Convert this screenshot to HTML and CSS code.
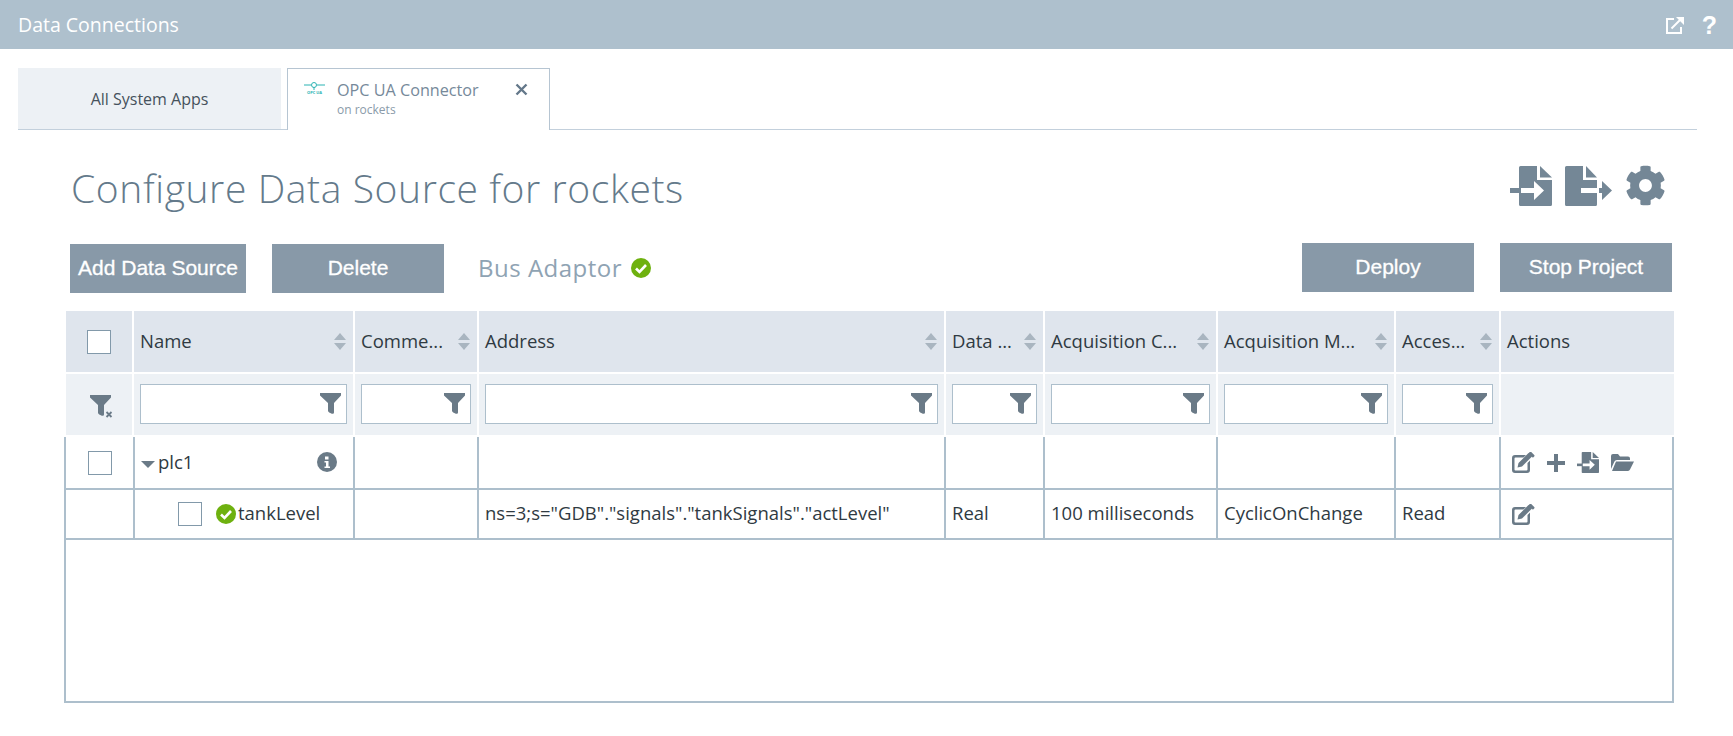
FILE: index.html
```html
<!DOCTYPE html>
<html lang="en">
<head>
    <meta charset="UTF-8">
    <meta name="viewport" content="width=device-width, initial-scale=1.0">
    <title>Data Connections</title>
    <link rel="stylesheet" href="styles.css">
</head>
<body>
    <svg class="sprites" width="0" height="0">
        <symbol id="i-import" viewBox="0 0 42 40">
            <path d="M9 1.5a1.5 1.5 0 0 1 1.5-1.5H27v14h15v24.5a1.5 1.5 0 0 1-1.5 1.5h-30A1.5 1.5 0 0 1 9 38.500z"/>
            <path d="M30 0l12 11.500H30z"/>
            <path d="M0 22h11v5H0z"/>
            <path d="M11 22h13v-7l10 9.500-10 9.500v-7H11z" fill="#fff"/>
        </symbol>
        <symbol id="i-export" viewBox="0 0 47 40">
            <path d="M0 1.500A1.500 1.500 0 0 1 1.500 0H18v14h14v8H16v5h16v11.500a1.500 1.500 0 0 1-1.500 1.500h-29A1.500 1.500 0 0 1 0 38.500z"/>
            <path d="M21 0l11 11.500H21z"/>
            <path d="M16 22h18v5H16z" fill="#fff"/>
            <path d="M34 22h3v-7l10 9.500-10 9.500v-7h-3z"/>
        </symbol>
        <symbol id="i-gear" viewBox="0 0 512 512">
            <path d="M487.400 315.700l-42.600-24.600c4.300-23.200 4.300-47 0-70.200l42.600-24.600c4.900-2.800 7.100-8.600 5.500-14-11.100-35.600-30-67.800-54.700-94.600-3.800-4.100-10-5.100-14.800-2.300L380.800 110c-17.900-15.400-38.500-27.300-60.800-35.100V25.800c0-5.600-3.900-10.500-9.400-11.700-36.700-8.200-74.300-7.800-109.200 0-5.500 1.200-9.400 6.100-9.400 11.700V75c-22.200 7.900-42.800 19.800-60.800 35.100L88.700 85.500c-4.900-2.800-11-1.900-14.800 2.300-24.700 26.700-43.600 58.900-54.700 94.600-1.700 5.400.6 11.200 5.500 14L67.300 221c-4.300 23.200-4.300 47 0 70.200l-42.600 24.600c-4.900 2.800-7.100 8.600-5.500 14 11.100 35.600 30 67.800 54.700 94.600 3.800 4.100 10 5.100 14.800 2.300l42.600-24.600c17.900 15.400 38.500 27.300 60.800 35.100v49.200c0 5.600 3.900 10.500 9.400 11.700 36.700 8.200 74.300 7.800 109.200 0 5.500-1.200 9.400-6.100 9.400-11.700v-49.200c22.200-7.900 42.800-19.800 60.800-35.100l42.600 24.600c4.900 2.800 11 1.900 14.800-2.300 24.700-26.700 43.600-58.900 54.700-94.600 1.500-5.500-.7-11.300-5.600-14.100zM256 336c-44.100 0-80-35.900-80-80s35.900-80 80-80 80 35.900 80 80-35.900 80-80 80z"/>
        </symbol>
        <symbol id="i-filter" viewBox="0 0 21 21">
            <path d="M0 0h21v2.500l-7 7.500v9.500a1.200 1.200 0 0 1-1.200 1.200c-2 0-4.800-2-4.800-3V10L0 2.500z"/>
        </symbol>
        <symbol id="i-edit" viewBox="0 0 23 21">
            <path d="M3 3h11l-2.500 2.500H3.500a1 1 0 0 0-1 1V17.500a1 1 0 0 0 1 1h11a1 1 0 0 0 1-1V11l2.500-2.500V18a3 3 0 0 1-3 3H3a3 3 0 0 1-3-3V6a3 3 0 0 1 3-3z"/>
            <path d="M5.500 15.500l1-4.500L16.500 1l3.500 3.500-10 10zM17.800 0a1 1 0 0 1 1.400 0l3 3a1 1 0 0 1 0 1.400l-1.300 1.300-4.400-4.400z"/>
        </symbol>
        <symbol id="i-check" viewBox="0 0 20 20">
            <circle cx="10" cy="10" r="10" fill="#6eb10f"/>
            <path d="M5 10.500l3.500 3.500L15 7" fill="none" stroke="#fff" stroke-width="2.600"/>
        </symbol>
    </svg>

    <header class="app-bar">
        <span class="app-title">Data Connections</span>
        <div class="app-icons">
            <svg width="20" height="20" viewBox="0 0 20 20" fill="none" stroke="#fff" stroke-width="2">
                <path d="M9 4H2v14h14v-6"/>
                <path d="M6.500 13.500L16.500 3.500"/>
                <path d="M11 2h8v8" stroke-width="0" fill="#fff"/>
            </svg>
            <span class="help">?</span>
        </div>
    </header>

    <nav class="tabs">
        <div class="tab">All System Apps</div>
        <div class="tab tab-active">
            <svg class="opc-icon" width="21" height="12" viewBox="0 0 21 12">
                <path d="M0 3h7M13 3h8M10 5v3" stroke="#2bb3b3" stroke-width="1" fill="none"/>
                <circle cx="10" cy="3" r="2.500" fill="none" stroke="#2bb3b3"/>
                <text x="10.500" y="12" text-anchor="middle" class="opc-label">OPC UA</text>
            </svg>
            <div class="tab-text">
                <div class="tab-name">OPC UA Connector</div>
                <div class="tab-sub">on rockets</div>
            </div>
            <svg class="tab-close" width="13" height="13" viewBox="0 0 13 13">
                <path d="M1.500 1.500l10 10M11.500 1.500l-10 10" stroke="#64788a" stroke-width="2.400"/>
            </svg>
        </div>
    </nav>

    <main class="content">
        <div class="title-row">
            <h1>Configure Data Source for rockets</h1>
            <div class="title-icons">
                <svg class="ti-import"><use href="#i-import"/></svg>
                <svg class="ti-export"><use href="#i-export"/></svg>
                <svg class="ti-gear"><use href="#i-gear"/></svg>
            </div>
        </div>

        <div class="toolbar">
            <button class="btn btn-add">Add Data Source</button>
            <button class="btn btn-delete">Delete</button>
            <span class="bus">Bus Adaptor <svg class="bus-check"><use href="#i-check"/></svg></span>
            <div class="toolbar-right">
                <button class="btn">Deploy</button>
                <button class="btn btn-stop">Stop Project</button>
            </div>
        </div>

        <div class="grid head-row">
            <div class="cell center"><span class="checkbox"></span></div>
            <div class="cell text sortable">Name</div>
            <div class="cell text sortable">Comme...</div>
            <div class="cell text sortable">Address</div>
            <div class="cell text sortable">Data ...</div>
            <div class="cell text sortable">Acquisition C...</div>
            <div class="cell text sortable">Acquisition M...</div>
            <div class="cell text sortable">Acces...</div>
            <div class="cell text">Actions</div>
        </div>

        <div class="grid filter-row">
            <div class="cell center">
                <svg class="clear-filter" width="24" height="24" viewBox="0 0 24 24">
                    <use href="#i-filter" width="21" height="21"/>
                    <path d="M16.500 17l5 5M21.500 17l-5 5" stroke="#6a7a87" stroke-width="1.800"/>
                </svg>
            </div>
            <div class="cell"><div class="filter-box"><svg class="filter-icon"><use href="#i-filter"/></svg></div></div>
            <div class="cell"><div class="filter-box"><svg class="filter-icon"><use href="#i-filter"/></svg></div></div>
            <div class="cell"><div class="filter-box"><svg class="filter-icon"><use href="#i-filter"/></svg></div></div>
            <div class="cell"><div class="filter-box"><svg class="filter-icon"><use href="#i-filter"/></svg></div></div>
            <div class="cell"><div class="filter-box"><svg class="filter-icon"><use href="#i-filter"/></svg></div></div>
            <div class="cell"><div class="filter-box"><svg class="filter-icon"><use href="#i-filter"/></svg></div></div>
            <div class="cell"><div class="filter-box"><svg class="filter-icon"><use href="#i-filter"/></svg></div></div>
            <div class="cell"></div>
        </div>

        <div class="table-body">
            <div class="grid body-row row-plc">
                <div class="cell center"><span class="checkbox"></span></div>
                <div class="cell name-cell">
                    <span class="caret"></span><span class="label">plc1</span>
                    <svg class="info" width="20" height="20" viewBox="0 0 20 20">
                        <circle cx="10" cy="10" r="10"/>
                        <path d="M8 4.500h3.500v3H8zM7.500 9h4v5.500H13V16H7.500v-1.500H9V10.500H7.500z" fill="#fff"/>
                    </svg>
                </div>
                <div class="cell"></div>
                <div class="cell"></div>
                <div class="cell"></div>
                <div class="cell"></div>
                <div class="cell"></div>
                <div class="cell"></div>
                <div class="cell actions">
                    <svg class="a-edit"><use href="#i-edit"/></svg>
                    <svg class="a-plus" viewBox="0 0 18 18"><path d="M7 0h4v7h7v4h-7v7H7v-7H0V7h7z"/></svg>
                    <svg class="a-import"><use href="#i-import"/></svg>
                    <svg class="a-folder" viewBox="0 0 23 17"><path d="M0 2a2 2 0 0 1 2-2h5l2 2.500h8a2 2 0 0 1 2 2V6H6a3 3 0 0 0-2.700 1.800L0 15z"/><path d="M5 7.500h18l-4 8a2.500 2.500 0 0 1-2 1.500H1z"/></svg>
                </div>
            </div>
            <div class="grid body-row row-tag">
                <div class="cell"></div>
                <div class="cell name-cell tag-name">
                    <span class="checkbox"></span>
                    <svg class="tag-check"><use href="#i-check"/></svg><span class="label">tankLevel</span>
                </div>
                <div class="cell"></div>
                <div class="cell text">ns=3;s="GDB"."signals"."tankSignals"."actLevel"</div>
                <div class="cell text">Real</div>
                <div class="cell text">100 milliseconds</div>
                <div class="cell text">CyclicOnChange</div>
                <div class="cell text">Read</div>
                <div class="cell actions"><svg class="a-edit"><use href="#i-edit"/></svg></div>
            </div>
        </div>
    </main>
</body>
</html>
```

FILE: styles.css
```css
/* Reset */
body, h1, button {
    margin: 0;
    padding: 0;
    box-sizing: border-box;
}

body {
    background: #fff;
    font-family: 'Open Sans', sans-serif;
    color: #2f3a42;
}

.sprites {
    display: block;
}

/* Top bar */
.app-bar {
    height: 49px;
    background: #aec0cd;
    color: #fff;
    display: flex;
    align-items: center;
    justify-content: space-between;
    padding: 0 16px 0 18px;
}

.app-title {
    font-size: 19.500px;
}

.app-icons {
    display: flex;
    align-items: center;
    gap: 17px;
}

.help {
    font-family: 'Liberation Sans', sans-serif;
    font-weight: bold;
    font-size: 25px;
    line-height: 24px;
}

/* Tabs */
.tabs {
    display: flex;
    height: 61px;
    margin: 19px 36px 0 18px;
    border-bottom: 1px solid #c3d0dc;
}

.tab {
    width: 263px;
    background: #edf1f5;
    display: flex;
    align-items: center;
    justify-content: center;
    font-size: 16px;
    font-weight: 500;
    color: #46525c;
}

.tab-active {
    position: relative;
    width: 263px;
    height: 62px;
    margin-left: 6px;
    background: #fff;
    border: 1px solid #b6c5d2;
    border-bottom: none;
    box-sizing: border-box;
    justify-content: flex-start;
    align-items: flex-start;
    padding: 11px 0 0 16px;
}

.opc-icon {
    margin-top: 2px;
}

.opc-label {
    font-size: 4px;
    font-weight: 700;
    fill: #2bb3b3;
}

.tab-text {
    margin-left: 12px;
}

.tab-name {
    font-size: 16.200px;
    font-weight: 400;
    line-height: 20px;
    color: #76899a;
}

.tab-sub {
    font-size: 12px;
    font-weight: 400;
    line-height: 16px;
    margin-top: 2px;
    color: #8a9ba9;
}

.tab-close {
    position: absolute;
    top: 14px;
    right: 21px;
}

/* Page content */
.content {
    padding: 0 59px 0 64px;
    width: 1610px;
}

.title-row {
    display: flex;
    justify-content: space-between;
    align-items: center;
    height: 80px;
    margin-top: 17px;
    padding-left: 7px;
    margin-bottom: 16px;
}

h1 {
    font-size: 39px;
    font-weight: 300;
    letter-spacing: 0.600px;
    color: #647a8b;
}

.title-icons {
    display: flex;
    align-items: center;
    gap: 13px;
    fill: #748796;
    padding-right: 8px;
    margin-top: -3px;
}

.ti-import {
    width: 42px;
    height: 40px;
}

.ti-export {
    width: 47px;
    height: 40px;
}

.ti-gear {
    width: 41px;
    height: 41px;
}

/* Toolbar */
.toolbar {
    display: flex;
    align-items: center;
    height: 50px;
    padding-left: 6px;
    margin-bottom: 18px;
}

.btn {
    width: 172px;
    height: 49px;
    background: #8899a8;
    border: none;
    color: #fff;
    font-family: 'Liberation Sans', sans-serif;
    font-size: 21px;
    -webkit-text-stroke: 0.300px #fff;
}

.btn-add {
    width: 176px;
}

.btn-delete {
    margin-left: 26px;
}

.bus {
    margin-left: 34px;
    padding-bottom: 2px;
    font-size: 24px;
    letter-spacing: 0.500px;
    color: #8fa3b3;
    display: flex;
    align-items: center;
    gap: 9px;
}

.bus-check {
    width: 20px;
    height: 20px;
    margin-top: 2px;
}

.toolbar-right {
    margin-left: auto;
    margin-right: 2px;
    display: flex;
    gap: 26px;
    margin-top: -2px;
}

/* Data table */
.grid {
    display: grid;
    grid-template-columns: 66px 219px 122px 465px 97px 171px 176px 103px 173px;
    column-gap: 2px;
    margin-left: 2px;
    font-size: 18.500px;
    white-space: nowrap;
}

.cell {
    display: flex;
    align-items: center;
    padding: 0 6px;
    overflow: hidden;
}

.center {
    justify-content: center;
    padding: 0;
}

.head-row {
    height: 61px;
    margin-bottom: 2px;
}

.head-row .cell {
    background: #dfe5ed;
    position: relative;
}

.head-row .text {
    padding-bottom: 2px;
}

.sortable::before, .sortable::after {
    content: "";
    position: absolute;
    right: 7px;
    border-left: 6px solid transparent;
    border-right: 6px solid transparent;
}

.sortable::before {
    top: 22px;
    border-bottom: 7px solid #a9b5c0;
}

.sortable::after {
    top: 32px;
    border-top: 7px solid #a9b5c0;
}

.checkbox {
    display: block;
    flex: none;
    width: 24px;
    height: 24px;
    box-sizing: border-box;
    border: 1px solid #8299aa;
    background: #fff;
}

.filter-row {
    height: 61px;
    margin-bottom: 2px;
}

.filter-row .cell {
    background: #edf1f5;
    fill: #6a7a87;
}

.filter-box {
    flex: 1;
    height: 40px;
    margin-top: -1px;
    box-sizing: border-box;
    border: 1px solid #adbfcc;
    background: #fff;
    display: flex;
    justify-content: flex-end;
    padding: 8px 5px 0 0;
}

.filter-icon {
    width: 21px;
    height: 21px;
}

.clear-filter {
    margin-left: 6px;
    margin-top: 4px;
}

.table-body {
    height: 266px;
    width: 1610px;
    box-sizing: border-box;
    border: solid #adbfcc;
    border-width: 0 2px 2px 2px;
}

.body-row {
    background: #adbfcc;
    margin-left: 0;
    grid-template-columns: 67px 218px 122px 465px 97px 171px 176px 103px 1fr;
    border-bottom: 2px solid #adbfcc;
}

.body-row .cell {
    background: #fff;
}

.body-row .text {
    padding-bottom: 4px;
}

.row-plc {
    height: 51px;
}

.row-tag {
    height: 48px;
}

.name-cell {
    position: relative;
}

.label {
    margin-bottom: 3px;
}

.caret {
    width: 0;
    height: 0;
    border-left: 7px solid transparent;
    border-right: 7px solid transparent;
    border-top: 7px solid #6a7a87;
    margin-right: 3px;
    margin-top: 3px;
}

.info {
    position: absolute;
    right: 16px;
    top: 15px;
    fill: #6a7a87;
}

.tag-name {
    padding-left: 43px;
}

.tag-check {
    width: 20px;
    height: 20px;
    margin: 0 2px 0 14px;
}

.actions {
    fill: #6a7a87;
    gap: 12px;
    padding-left: 11px;
}

.a-edit {
    width: 23px;
    height: 21px;
}

.a-plus {
    width: 18px;
    height: 18px;
}

.a-import {
    width: 22px;
    height: 21px;
}

.a-folder {
    width: 23px;
    height: 17px;
}
```
